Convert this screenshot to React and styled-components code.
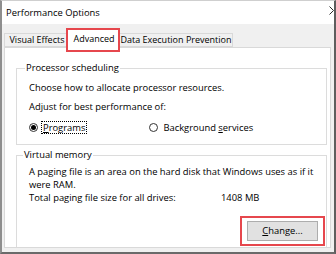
import React from 'react';
import styled, { createGlobalStyle } from 'styled-components';

const GlobalStyle = createGlobalStyle`
    html, body {
        margin: 0;
        padding: 0;
        width: 336px;
        height: 254px;
        overflow: hidden;
        background: #f0f0f0;
    }
    * { box-sizing: border-box; }
`;

const Window = styled.div`
    width: 336px;
    height: 254px;
    display: flex;
    flex-direction: column;
    background: #f0f0f0;
    border-top: 1px solid #cfcfcf;
    border-left: 2px solid #8e8e8e;
    border-right: 2px solid #5e5e5e;
    border-bottom: 2px solid #6a6a6a;
    font-family: "Open Sans", "Noto Sans", sans-serif;
    font-size: 9.4px;
    color: #000;
    overflow: hidden;
`;

const TitleBar = styled.div`
    height: 23px;
    flex: none;
    background: #fff;
    display: flex;
    align-items: center;
    justify-content: space-between;
    padding-left: 4px;
`;

const Title = styled.span`
    line-height: 12px;
    margin-top: 1px;
`;

const CloseGlyph = styled.svg`
    width: 5px;
    height: 9px;
    margin-top: -4px;
    flex: none;
`;

const Body = styled.div`
    flex: 1;
    display: flex;
    flex-direction: column;
    padding: 0 3px 4px 2px;
`;

const TabStrip = styled.div`
    height: 23px;
    flex: none;
    display: flex;
    align-items: flex-end;
`;

const Tab = styled.div`
    position: relative;
    width: ${p => p.w}px;
    height: ${p => (p.active ? 19 : 14)}px;
    margin-bottom: ${p => (p.active ? -1 : 0)}px;
    z-index: ${p => (p.active ? 1 : 0)};
    display: flex;
    align-items: center;
    justify-content: center;
    white-space: nowrap;
    font-size: 9px;
    line-height: 12px;
    background: ${p => (p.active ? '#fff' : '#f0f0f0')};
    border: 1px solid #d9d9d9;
    border-bottom: ${p => (p.active ? 'none' : '1px solid #d9d9d9')};
    border-left: ${p => (p.noLeft ? 'none' : '1px solid #d9d9d9')};
    padding: 0 0 ${p => (p.active ? 1 : 0)}px ${p => p.shift || 0}px;
`;

const Highlight = styled.span`
    position: absolute;
    left: -2px;
    right: -1px;
    top: -2px;
    bottom: -4px;
    border: 2px solid #e6474d;
    pointer-events: none;
`;

const Panel = styled.div`
    flex: 1;
    display: flex;
    flex-direction: column;
    background: #fff;
    border: 1px solid #d9d9d9;
    padding: 14px 3px 0 11px;
    overflow: hidden;
`;

const Group = styled.fieldset`
    margin: 0 0 ${p => p.gap || 0}px 0;
    padding: 0;
    border: 1px solid #dcdcdc;
    border-bottom: ${p => (p.open ? 'none' : '1px solid #dcdcdc')};
    min-width: 0;
    flex: ${p => (p.grow ? 1 : 'none')};
    display: flex;
    flex-direction: column;
`;

const Legend = styled.legend`
    margin-left: ${p => p.indent}px;
    padding: 0 1px;
    line-height: 12px;
`;

const GroupBody = styled.div`
    padding: ${p => p.pad};
    display: flex;
    flex-direction: column;
`;

const Line = styled.div`
    line-height: ${p => p.lh || 12}px;
    margin-top: ${p => p.mt || 0}px;
    white-space: nowrap;
`;

const RadioRow = styled.div`
    display: flex;
    align-items: center;
    height: 12px;
    margin-top: 8px;
`;

const RadioItem = styled.label`
    display: flex;
    align-items: center;
    margin-right: ${p => p.space || 0}px;
`;

const Dot = styled.span`
    width: 9px;
    height: 9px;
    border-radius: 50%;
    border: 1px solid #333;
    display: flex;
    align-items: center;
    justify-content: center;
    margin-right: 3px;
    flex: none;
    &::after {
        content: '';
        width: 5px;
        height: 5px;
        border-radius: 50%;
        background: ${p => (p.checked ? '#000' : 'transparent')};
    }
`;

const Caption = styled.span`
    line-height: 11px;
    padding: 0 1px;
    border: 1px dotted ${p => (p.focused ? '#000' : 'transparent')};
`;

const InfoRow = styled.div`
    display: flex;
    line-height: 13px;
`;

const InfoLabel = styled.span`
    width: 192px;
    flex: none;
`;

const ButtonRow = styled.div`
    display: flex;
    justify-content: flex-end;
    padding-right: 8px;
    margin-top: 17px;
`;

const ButtonWrap = styled.div`
    position: relative;
`;

const Button = styled.button`
    width: 71px;
    height: 20px;
    background: #e1e1e1;
    border: 1px solid #adadad;
    font-family: inherit;
    font-size: inherit;
    color: #000;
    padding: 0;
    line-height: 12px;
`;

const ButtonHighlight = styled.span`
    position: absolute;
    left: -7px;
    right: -7px;
    top: -5px;
    bottom: -5px;
    border: 2px solid #e6474d;
    pointer-events: none;
`;

const tabs = [
    { label: 'Visual Effects', w: 63, shift: 3 },
    { label: 'Advanced', w: 53, active: true, shift: 1 },
    { label: 'Data Execution Prevention', w: 113 },
];

export default function App() {
    return (
        <Window>
            <GlobalStyle />
            <TitleBar>
                <Title>Performance Options</Title>
                <CloseGlyph viewBox="0 0 5 9">
                    <path d="M0.5 0.5 L4.5 4.5 L0.5 8.5" fill="none" stroke="#2b2b2b" strokeWidth="1" />
                </CloseGlyph>
            </TitleBar>
            <Body>
                <TabStrip>
                    {tabs.map((t, i) => (
                        <Tab key={t.label} w={t.w} shift={t.shift} active={t.active} noLeft={i > 0 && !t.active}>
                            {t.label}
                            {t.active && <Highlight />}
                        </Tab>
                    ))}
                </TabStrip>
                <Panel>
                    <Group gap={4}>
                        <Legend indent={8}>Processor scheduling</Legend>
                        <GroupBody pad="8px 12px 11px 12px">
                            <Line>Choose how to allocate processor resources.</Line>
                            <Line mt={7}>Adjust for best performance of:</Line>
                            <RadioRow>
                                <RadioItem space={62}>
                                    <Dot checked />
                                    <Caption focused><u>P</u>rograms</Caption>
                                </RadioItem>
                                <RadioItem>
                                    <Dot />
                                    <Caption>Background <u>s</u>ervices</Caption>
                                </RadioItem>
                            </RadioRow>
                        </GroupBody>
                    </Group>
                    <Group open grow>
                        <Legend indent={6}>Virtual memory</Legend>
                        <GroupBody pad="4px 0 0 12px">
                            <Line lh={13}>
                                A paging file is an area on the hard disk that Windows uses as if it<br />
                                were RAM.
                            </Line>
                            <InfoRow>
                                <InfoLabel>Total paging file size for all drives:</InfoLabel>
                                <span>1408 MB</span>
                            </InfoRow>
                            <ButtonRow>
                                <ButtonWrap>
                                    <Button><u>C</u>hange...</Button>
                                    <ButtonHighlight />
                                </ButtonWrap>
                            </ButtonRow>
                        </GroupBody>
                    </Group>
                </Panel>
            </Body>
        </Window>
    );
}
